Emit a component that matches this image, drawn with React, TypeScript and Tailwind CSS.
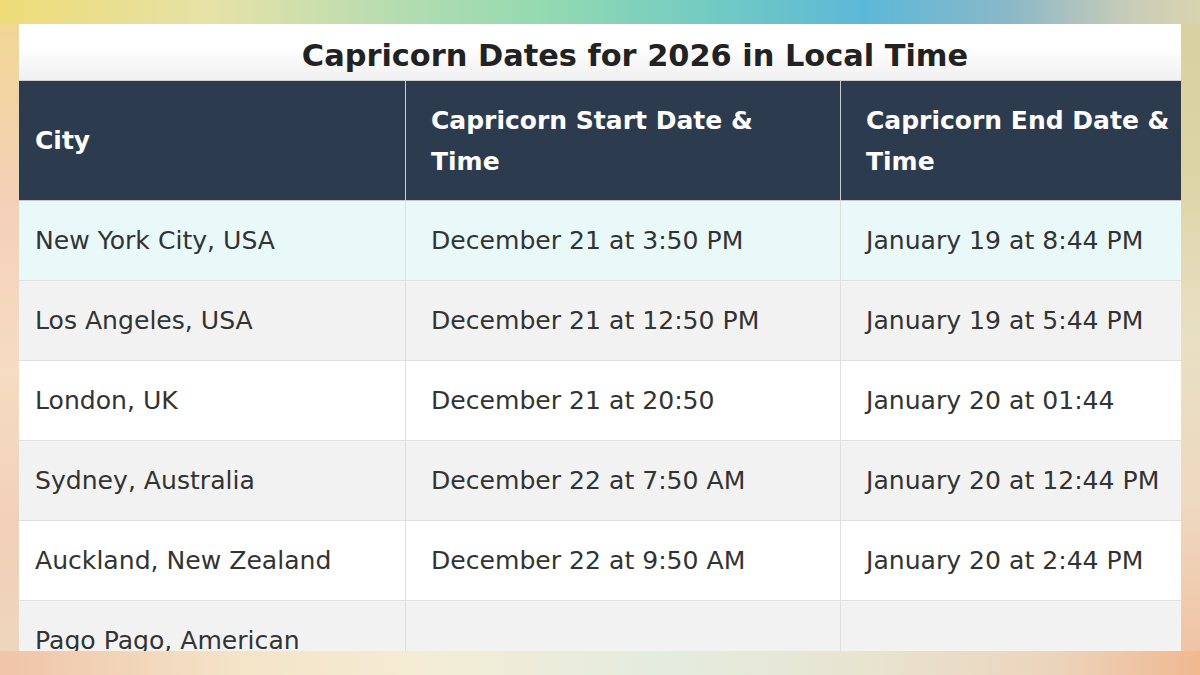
import React from "react";

const rows = [
  { city: "New York City, USA", start: "December 21 at 3:50 PM", end: "January 19 at 8:44 PM", bg: "bg-[#e9f8f9]" },
  { city: "Los Angeles, USA", start: "December 21 at 12:50 PM", end: "January 19 at 5:44 PM", bg: "bg-[#f2f2f2]" },
  { city: "London, UK", start: "December 21 at 20:50", end: "January 20 at 01:44", bg: "bg-white" },
  { city: "Sydney, Australia", start: "December 22 at 7:50 AM", end: "January 20 at 12:44 PM", bg: "bg-[#f2f2f2]" },
  { city: "Auckland, New Zealand", start: "December 22 at 9:50 AM", end: "January 20 at 2:44 PM", bg: "bg-white" },
  { city: "Pago Pago, American Samoa", start: "December 20 at 3:50 PM", end: "January 19 at 8:44 AM", bg: "bg-[#f2f2f2]" },
];

export default function App() {
  return (
    <div className="w-[1200px] h-[675px] overflow-hidden pt-[24px] px-[19px] font-['DejaVu_Sans',sans-serif] [background:linear-gradient(to_right,#eedc78,#e6e2a8_18%,#b8dcb0_32%,#94dab0_45%,#70cac4_60%,#5cb8d8_72%,#8ab8c8_84%,#c8ccb8_94%,#d8d4b0)_top/100%_24px_no-repeat,linear-gradient(to_right,#f0c4a8,#f4e4c8_20%,#f4ecd4_35%,#e4ece0_55%,#e8e4d0_72%,#ecd4bc_88%,#f0b890)_bottom/100%_24px_no-repeat,linear-gradient(to_bottom,#f0d890,#f4d0b8_30%,#f6dcc0_55%,#f0d0b8_80%,#eed8bc)_left/19px_100%_no-repeat,linear-gradient(to_bottom,#d8d0a0,#dcd4a4_25%,#e8e0c4_50%,#eed8c0_75%,#f0c0a0)_right/19px_100%_no-repeat]">
      <div className="w-[1162px] h-[627px] overflow-hidden bg-white">
        <div className="w-[1232px] h-[57px] border-b border-[#cfcfcf] bg-[linear-gradient(to_bottom,#ffffff_40%,#f0f0f0)] flex items-center justify-center pt-[8px]">
          <h1 className="text-[30.4px] font-bold text-[#222] leading-none whitespace-nowrap">Capricorn Dates for 2026 in Local Time</h1>
        </div>
        <div className="grid grid-cols-[387px_435px_340px] bg-[#2d3b4e] text-white font-bold text-[25px] leading-[41px] border-b border-[#c8c8c8]">
          <div className="pl-[16px] pr-[16px] h-[119px] flex items-center border-r border-[#c8ccd2]">City</div>
          <div className="pl-[25px] pr-[16px] h-[119px] flex items-center border-r border-[#c8ccd2]">Capricorn Start Date &amp; Time</div>
          <div className="pl-[25px] pr-[4px] h-[119px] flex items-center">Capricorn End Date &amp; Time</div>
        </div>
        {rows.map((r) => (
          <div key={r.city} className={`grid grid-cols-[387px_435px_340px] text-[25.1px] leading-[41px] text-[#333] border-b border-[#e0e0e0] ${r.bg}`}>
            <div className="pl-[16px] pr-[40px] py-[19px] flex items-center border-r border-[#dedede]">{r.city}</div>
            <div className="pl-[25px] pr-[16px] py-[19px] flex items-center border-r border-[#dedede]">{r.start}</div>
            <div className="pl-[25px] pr-[4px] py-[19px] flex items-center whitespace-nowrap">{r.end}</div>
          </div>
        ))}
      </div>
    </div>
  );
}
